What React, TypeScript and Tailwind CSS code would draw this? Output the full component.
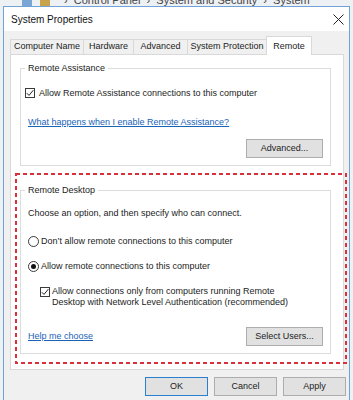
import React from "react";

const tabs = [
  { label: "Computer Name", w: "w-[73px]" },
  { label: "Hardware", w: "w-[50px]" },
  { label: "Advanced", w: "w-[54px]" },
  { label: "System Protection", w: "w-[79px]" },
];

const Check = () => (
  <span className="flex h-[10px] w-[10px] shrink-0 items-center justify-center border border-[#3a3a3a] bg-white">
    <svg width="8" height="8" viewBox="0 0 8 8">
      <path d="M0.8 4.2 L3 6.4 L7.3 1.2" fill="none" stroke="#222" strokeWidth="1" />
    </svg>
  </span>
);

const Radio = ({ checked }: { checked?: boolean }) => (
  <span className="flex h-[11px] w-[11px] shrink-0 items-center justify-center rounded-full border border-[#3a3a3a] bg-white">
    {checked && <span className="h-[5px] w-[5px] rounded-full bg-[#111]" />}
  </span>
);

const Button = ({ label, primary }: { label: string; primary?: boolean }) => (
  <div
    className={`flex h-[19px] items-center justify-center bg-[#e1e1e1] border ${
      primary ? "border-[#2a7fd0]" : "border-[#adadad]"
    }`}
  >
    {label}
  </div>
);

const App = () => {
  return (
    <div className="h-[400px] w-[353px] overflow-hidden bg-[#eef1f4] font-['Liberation_Sans',Arial,sans-serif] text-[9px] text-[#1c1c1c]">
      {/* blurred explorer breadcrumb behind the dialog */}
      <div className="flex h-[6px] items-end overflow-hidden pl-[22px] text-[11px] leading-[12px] text-[#444]">
        <span className="mr-[8px] h-[10px] w-[10px] bg-[#7aa6d6]" />
        <span className="mr-[14px] h-[10px] w-[10px] bg-[#c9a34a]" />
        <span>›&nbsp; Control Panel &nbsp;›&nbsp; System and Security &nbsp;›&nbsp; System</span>
      </div>

      <div className="ml-[3px] h-[394px] w-[347px] border-x border-t border-[#6fa2d8] bg-[#f0f0f0]">
        {/* title bar */}
        <div className="flex h-[24px] items-center justify-between bg-white pl-[7px] pr-[5px]">
          <span className="text-[10px] text-[#111]">System Properties</span>
          <svg width="11" height="11" viewBox="0 0 11 11">
            <path d="M0.5 0.5 L10.5 10.5 M10.5 0.5 L0.5 10.5" stroke="#222" strokeWidth="1" />
          </svg>
        </div>

        <div className="px-[6px] pt-[5px]">
          {/* tabs */}
          <div className="flex h-[18px] items-end">
            {tabs.map((t) => (
              <div
                key={t.label}
                className={`${t.w} flex h-[15px] items-center justify-center border-l border-t border-[#d9d9d9] bg-[#f0f0f0]`}
              >
                {t.label}
              </div>
            ))}
            <div className="relative z-10 -mb-px flex h-[19px] w-[46px] items-start justify-center border-x border-t border-[#d9d9d9] bg-white pt-[3px]">
              Remote
            </div>
          </div>

          {/* tab page */}
          <div className="relative h-[316px] w-[334px] border border-[#d9d9d9] bg-white pl-[9px] pr-[12px] pt-[7px]">
            <fieldset className="border border-[#dcdcdc] pb-[7px] pl-[4px] pr-[7px]">
              <legend className="px-[3px] leading-[12px]">Remote Assistance</legend>
              <div className="mt-[13px] flex items-center gap-[4px] leading-[12px]">
                <Check />
                <span>Allow Remote Assistance connections to this computer</span>
              </div>
              <div className="mt-[17px] pl-[3px] leading-[12px] text-[#1a64b8] underline">
                What happens when I enable Remote Assistance?
              </div>
              <div className="mt-[11px] flex justify-end">
                <div className="w-[77px]">
                  <Button label="Advanced..." />
                </div>
              </div>
            </fieldset>

            <fieldset className="mt-[18px] border border-[#dcdcdc] pb-[7px] pl-[4px] pr-[7px]">
              <legend className="px-[3px] leading-[12px]">Remote Desktop</legend>
              <div className="mt-[11px] pl-[3px] leading-[12px]">
                Choose an option, and then specify who can connect.
              </div>
              <div className="mt-[16px] flex items-center gap-[2px] pl-[3px] leading-[12px]">
                <Radio />
                <span>Don’t allow remote connections to this computer</span>
              </div>
              <div className="mt-[13px] flex items-center gap-[2px] pl-[3px] leading-[12px]">
                <Radio checked />
                <span>Allow remote connections to this computer</span>
              </div>
              <div className="mt-[14px] flex items-start gap-[2px] pl-[15px] leading-[11px]">
                <span className="mt-[1px]">
                  <Check />
                </span>
                <span>
                  Allow connections only from computers running Remote
                  <br />
                  Desktop with Network Level Authentication (recommended)
                </span>
              </div>
              <div className="mt-[19px] flex items-center justify-between pl-[3px]">
                <span className="text-[#1a64b8] underline">Help me choose</span>
                <div className="w-[77px]">
                  <Button label="Select Users..." />
                </div>
              </div>
            </fieldset>

            {/* red annotation box */}
            <svg className="absolute left-[4px] top-[118px]" width="332" height="191">
              <rect
                x="1"
                y="1"
                width="330"
                height="189"
                fill="none"
                stroke="#d9303c"
                strokeWidth="2"
                strokeDasharray="4 3"
              />
            </svg>
          </div>

          {/* dialog buttons */}
          <div className="mt-[7px] flex justify-end gap-[6px] pr-[-3px]">
            <div className="w-[63px]">
              <Button label="OK" primary />
            </div>
            <div className="w-[63px]">
              <Button label="Cancel" />
            </div>
            <div className="-mr-[3px] w-[63px]">
              <Button label="Apply" />
            </div>
          </div>
        </div>
      </div>
    </div>
  );
};

export default App;
